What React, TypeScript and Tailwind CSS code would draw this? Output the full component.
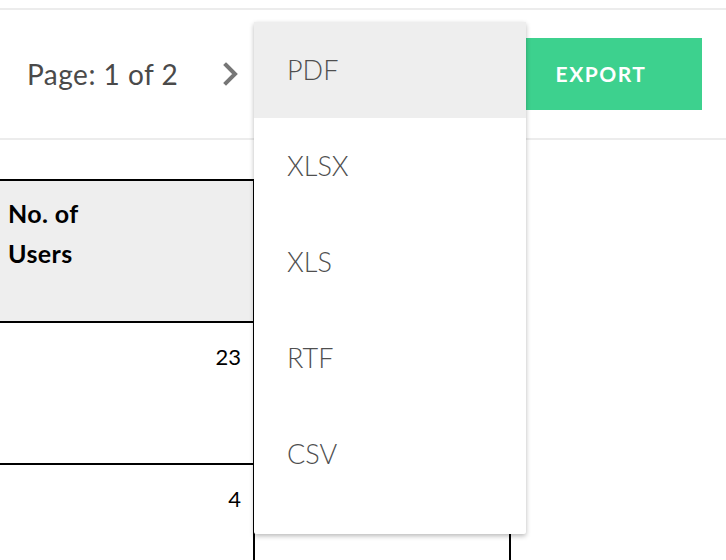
import React from "react";

const items = ["PDF", "XLSX", "XLS", "RTF", "CSV"];

export default function App() {
  return (
    <div className="relative w-[726px] h-[560px] overflow-hidden bg-white" style={{ fontFamily: "Lato, 'Open Sans', sans-serif" }}>
      <div className="pt-2">
        <div className="flex items-center h-[132px] border-t-2 border-b-2 border-[#ececec]">
          <span className="ml-[27px] text-[28px] leading-none text-[#4a4a4a] tracking-[0.5px]">Page: 1 of 2</span>
          <svg className="ml-[45px]" width="16" height="24" viewBox="0 0 16 24">
            <polyline points="3,3 12,12 3,21" fill="none" stroke="#767676" strokeWidth="4" strokeLinecap="square" strokeLinejoin="miter" />
          </svg>
          <button className="ml-auto mr-[24px] w-[202px] h-[72px] bg-[#3dd18e] text-white font-bold text-[21px] tracking-[1.5px] flex items-center justify-center">
            EXPORT
          </button>
        </div>
      </div>

      <div className="mt-[39px] flex text-black">
        <div className="w-[255px] shrink-0">
          <div className="h-[144px] border-t-2 border-b-2 border-r-2 border-black bg-[#eeeeee] pl-2 pt-[12px] text-[25px] font-bold leading-[40px] tracking-[0.4px]">
            <div>No. of</div>
            <div>Users</div>
          </div>
          <div className="h-[142px] border-b-2 border-r-2 border-black text-right pr-[12px] pt-[21px] text-[22px] leading-[1.2]">23</div>
          <div className="h-[142px] border-b-2 border-r-2 border-black text-right pr-[12px] pt-[21px] text-[22px] leading-[1.2]">4</div>
        </div>
        <div className="w-[256px] shrink-0">
          <div className="h-[144px] border-t-2 border-b-2 border-r-2 border-black bg-[#eeeeee]"></div>
          <div className="h-[142px] border-b-2 border-r-2 border-black"></div>
          <div className="h-[142px] border-b-2 border-r-2 border-black"></div>
        </div>
      </div>

      <div className="absolute left-[254px] top-[22px] w-[272px] h-[512px] bg-white shadow-[0_2px_5px_rgba(0,0,0,0.28)] rounded-[2px]">
        {items.map((it, i) => (
          <div
            key={it}
            className={`h-[96px] flex items-center pl-[33px] text-[27px] font-light text-[#4f4f4f] ${i === 0 ? "bg-[#eeeeee]" : ""}`}
          >
            {it}
          </div>
        ))}
      </div>
    </div>
  );
}
